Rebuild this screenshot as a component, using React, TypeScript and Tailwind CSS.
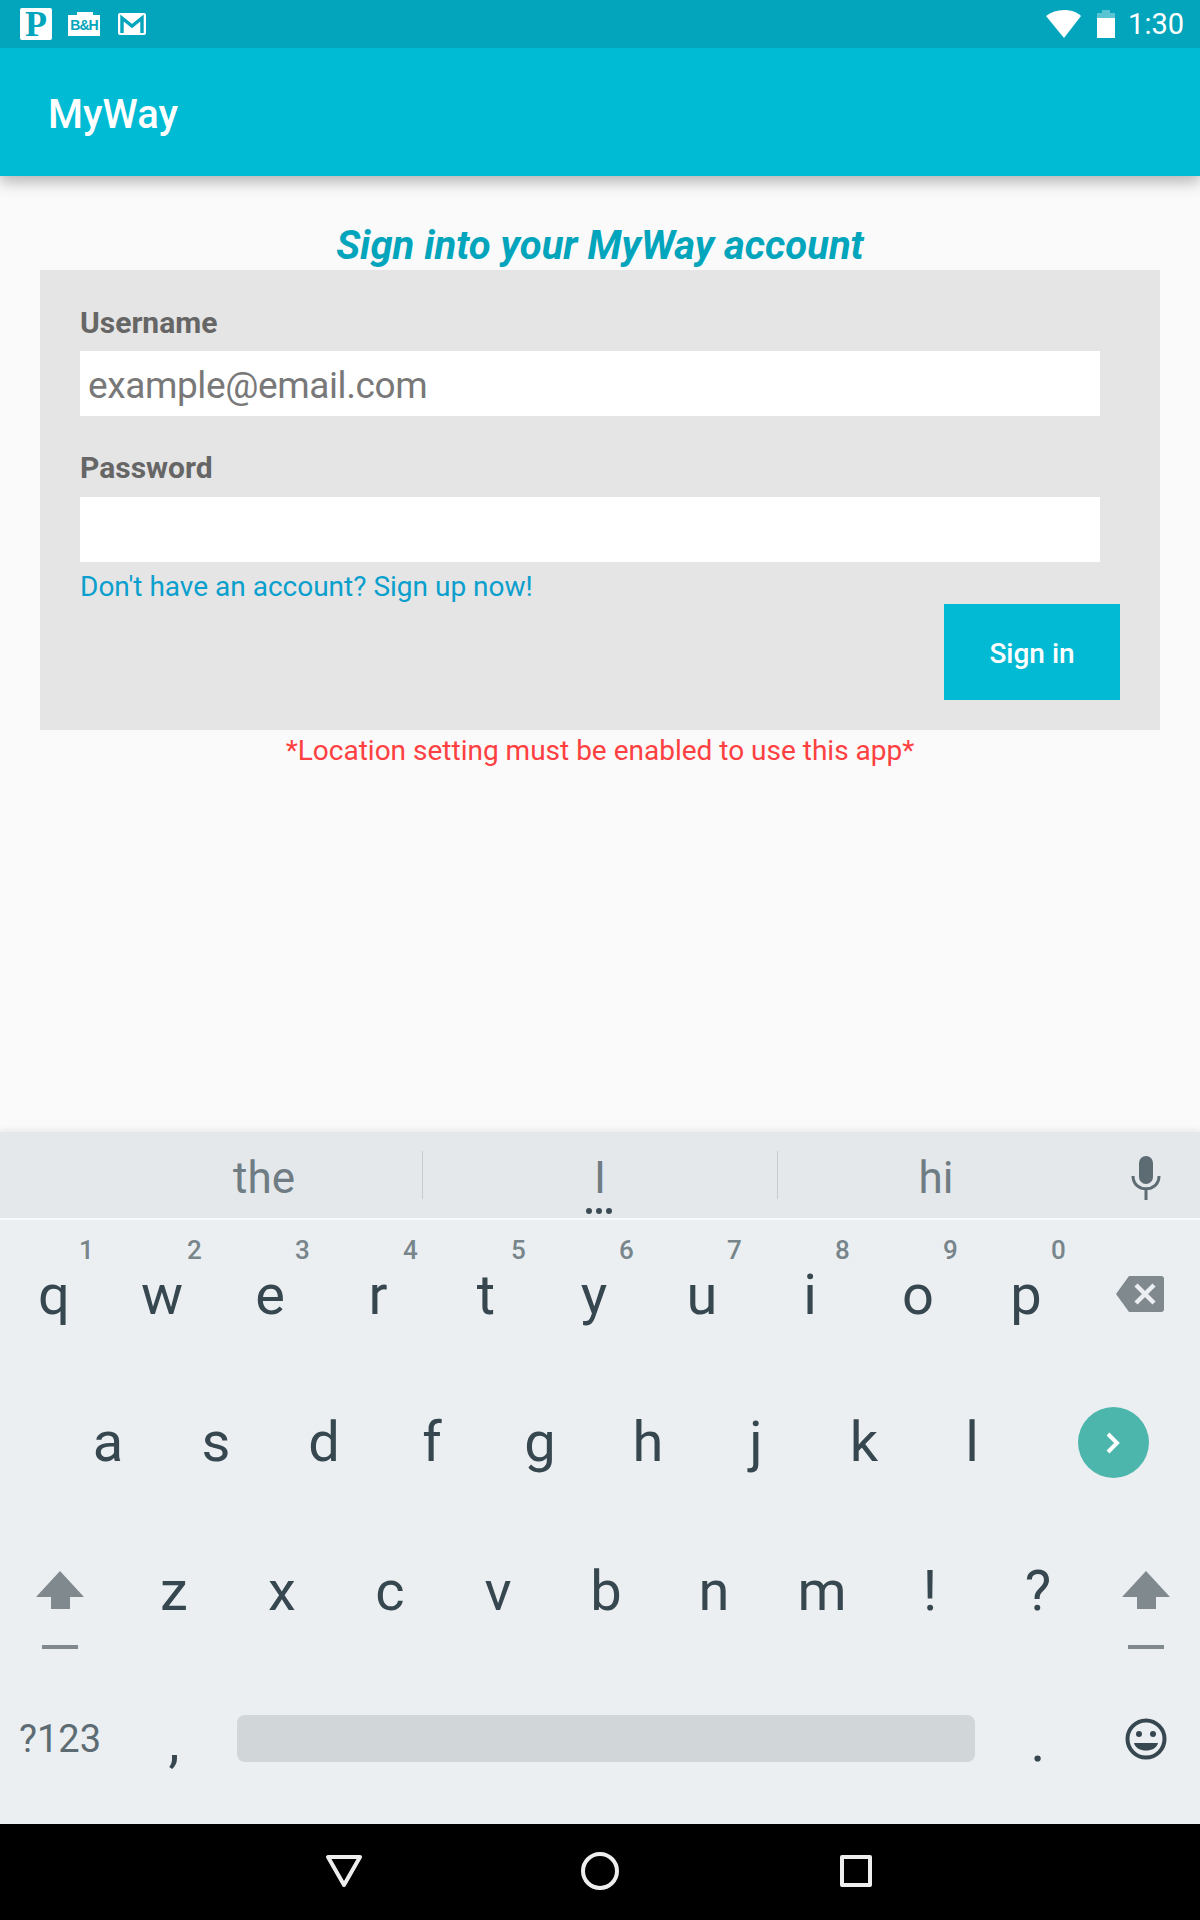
import React from "react";

const row1 = [["q","1"],["w","2"],["e","3"],["r","4"],["t","5"],["y","6"],["u","7"],["i","8"],["o","9"],["p","0"]];
const row2 = ["a","s","d","f","g","h","j","k","l"];
const row3 = ["z","x","c","v","b","n","m","!","?"];

function Key({ label, hint, up }: { label: string; hint?: string; up?: boolean }) {
  return (
    <div className="relative w-[108px] h-full flex items-center justify-center text-[56px] leading-none text-[#37474f]">
      <span className={up ? "relative top-[-4px]" : "relative top-[-2px]"}>{label}</span>
      {hint && (
        <span className="absolute left-[79px] top-[12px] text-[26px] leading-none font-medium text-[#78858b]">{hint}</span>
      )}
    </div>
  );
}

function Shift() {
  return (
    <div className="flex flex-col items-center">
      <svg width="48" height="38" viewBox="0 0 48 38"><path d="M24 0 L48 26 H34 V38 H15 V26 H0 Z" fill="#80898e" /></svg>
      <div className="w-[36px] h-[4px] mt-[36px] bg-[#80898e]" />
    </div>
  );
}

export default function App() {
  return (
    <div className="w-[1200px] h-[1920px] flex flex-col overflow-hidden bg-[#fafafa] font-['Roboto',sans-serif]">
      <div className="relative z-20 h-[48px] shrink-0 bg-[#02a5bb] flex items-center justify-between pl-[20px] pr-[16px]">
        <div className="flex items-center">
          <div className="w-[32px] h-[32px] rounded-[2px] bg-white flex items-center justify-center font-['Liberation_Serif',serif] font-bold text-[36px] leading-none text-[#02a5bb]">P</div>
          <div className="relative ml-[16px] w-[32px] h-[24px] mt-[-1px]">
            <div className="absolute left-[9px] top-0 w-[16px] h-[5px] bg-white" />
            <div className="absolute left-0 right-0 top-[3px] bottom-0 bg-white flex items-center justify-center text-[14px] leading-none font-black text-[#02a5bb] font-['Liberation_Sans',sans-serif] tracking-[-1px]">B&amp;H</div>
          </div>
          <svg className="ml-[18px]" width="28" height="24" viewBox="0 0 28 24">
            <rect x="0" y="1" width="28" height="22" rx="2" fill="#fff" />
            <path d="M4 21 V6 L14 14 L24 6 V21" fill="none" stroke="#02a5bb" strokeWidth="3.4" />
          </svg>
        </div>
        <div className="flex items-center text-white">
          <svg width="36" height="28" viewBox="0 0 36 28"><path d="M18 28 L0 6 C5 2 11 0 18 0 C25 0 31 2 35 6 Z" fill="#fff" /></svg>
          <svg className="ml-[14px]" width="20" height="30" viewBox="0 0 20 30">
            <path d="M6 1 H14 V4 H19 V9 H1 V4 H6 Z" fill="#fff" fillOpacity="0.35" />
            <rect x="1" y="9" width="18" height="20" fill="#fff" />
          </svg>
          <span className="ml-[12px] text-[29px] leading-none">1:30</span>
        </div>
      </div>

      <div className="relative z-10 h-[128px] shrink-0 bg-[#00bbd4] shadow-[0_6px_14px_rgba(0,0,0,0.28)] flex items-center pl-[48px] pt-[6px]">
        <span className="text-[40px] leading-none font-medium text-white">MyWay</span>
      </div>

      <main className="flex-1 flex flex-col items-center px-[40px] pt-[45px]">
        <h1 className="h-[49px] text-[40px] leading-[49px] italic font-bold text-[#02a5bb]">Sign into your MyWay account</h1>
        <form className="w-full h-[460px] bg-[#e5e5e5] pt-[28px] pl-[40px] pr-[60px] relative">
          <div className="text-[30px] leading-[49px] h-[53px] font-bold text-[#666666]">Username</div>
          <div className="h-[65px] bg-white flex items-center pl-[8px] pt-[5px] text-[37px] tracking-[-0.4px] text-[#787878]">example@email.com</div>
          <div className="mt-[27px] text-[30px] leading-[49px] h-[54px] font-bold text-[#666666]">Password</div>
          <div className="h-[65px] bg-white" />
          <div className="mt-[7px] text-[28px] leading-[36px] text-[#0a9fcc]">Don&apos;t have an account? Sign up now!</div>
          <button type="button" className="absolute left-[904px] top-[334px] w-[176px] h-[96px] pt-[4px] bg-[#02bad3] text-white text-[28px] font-medium">Sign in</button>
        </form>
        <div className="mt-[3px] text-[28px] leading-[36px] text-[#ff4040]">*Location setting must be enabled to use this app*</div>
      </main>

      <div className="shrink-0 h-[692px] bg-[#ebeff2] flex flex-col shadow-[0_-3px_5px_rgba(0,0,0,0.06)]">
        <div className="relative h-[86px] bg-[#e4e8eb] flex items-center pl-[106px] text-[44px] text-[#6f7c83]">
          <div className="w-[316px] h-[48px] pt-[6px] flex items-center justify-center">the</div>
          <div className="w-px h-[48px] bg-[#c7ccd0]" />
          <div className="w-[354px] h-[48px] pt-[6px] flex items-center justify-center">I</div>
          <div className="w-px h-[48px] bg-[#c7ccd0]" />
          <div className="w-[316px] h-[48px] pt-[6px] flex items-center justify-center">hi</div>
          <svg className="absolute left-[1130px] top-[24px]" width="32" height="44" viewBox="0 0 32 44">
            <rect x="9" y="0" width="14" height="28" rx="7" fill="#5d6b73" />
            <path d="M3 20 C3 37 29 37 29 20 M16 32 V44" fill="none" stroke="#5d6b73" strokeWidth="3" />
          </svg>
          <div className="absolute left-[586px] top-[76px] flex gap-[4px]">
            <div className="w-[6px] h-[6px] rounded-full bg-[#3d4c54]" />
            <div className="w-[6px] h-[6px] rounded-full bg-[#3d4c54]" />
            <div className="w-[6px] h-[6px] rounded-full bg-[#3d4c54]" />
          </div>
        </div>
        <div className="h-[2px] bg-[#f7f9fa]" />

        <div className="pt-[5px] flex flex-col">
          <div className="h-[147px] flex">
            {row1.map(([l, h]) => <Key key={l} label={l} hint={h} up />)}
            <div className="w-[120px] h-full flex items-center justify-center pb-[9px]">
              <svg width="48" height="36" viewBox="0 0 48 36">
                <path d="M13 0 H45 A3 3 0 0 1 48 3 V33 A3 3 0 0 1 45 36 H13 L0 18 Z" fill="#80898e" />
                <path d="M20 9 L38 27 M38 9 L20 27" stroke="#ebeff2" strokeWidth="4.5" />
              </svg>
            </div>
          </div>
          <div className="h-[147px] flex pl-[54px]">
            {row2.map((l) => <Key key={l} label={l} up />)}
            <div className="w-[174px] h-full flex items-center justify-center pb-[6px]">
              <div className="w-[71px] h-[71px] rounded-full bg-[#4db6ac] flex items-center justify-center">
                <svg width="16" height="24" viewBox="0 0 16 24"><path d="M3 3 L12 12 L3 21" fill="none" stroke="#fff" strokeWidth="4" /></svg>
              </div>
            </div>
          </div>
          <div className="h-[147px] flex">
            <div className="w-[120px] h-full flex items-center justify-center pt-[34px]"><Shift /></div>
            {row3.map((l) => <Key key={l} label={l} />)}
            <div className="w-[108px] h-full flex items-center justify-center pt-[34px]"><Shift /></div>
          </div>
          <div className="h-[145px] flex items-center">
            <div className="w-[120px] flex justify-center text-[38px] leading-none text-[#5d6b73]">?123</div>
            <div className="w-[108px] flex justify-center text-[56px] leading-none text-[#37474f] relative top-[3px]">,</div>
            <div className="ml-[9px] w-[738px] h-[47px] rounded-[8px] bg-[#d1d6d9]" />
            <div className="w-[117px] pl-[9px] flex justify-center text-[56px] leading-none text-[#37474f] relative top-[3px]">.</div>
            <div className="w-[108px] flex justify-center">
              <svg width="42" height="42" viewBox="0 0 42 42">
                <circle cx="21" cy="21" r="18.5" fill="none" stroke="#37474f" strokeWidth="4" />
                <circle cx="14" cy="16" r="3" fill="#37474f" />
                <circle cx="28" cy="16" r="3" fill="#37474f" />
                <path d="M9 25 H33 C31 35 11 35 9 25 Z" fill="#37474f" />
              </svg>
            </div>
          </div>
        </div>
      </div>

      <nav className="h-[96px] shrink-0 bg-black flex items-center justify-center pb-[2px] pr-[3px]">
        <svg width="38" height="34" viewBox="0 0 38 34"><path d="M3 3 H35 L19 31 Z" fill="none" stroke="#eeeeee" strokeWidth="4" strokeLinejoin="round" /></svg>
        <div className="ml-[218px] w-[38px] h-[38px] rounded-full border-[4px] border-[#eeeeee]" />
        <div className="ml-[221px] w-[32px] h-[32px] rounded-[2px] border-[4px] border-[#eeeeee]" />
      </nav>
    </div>
  );
}
